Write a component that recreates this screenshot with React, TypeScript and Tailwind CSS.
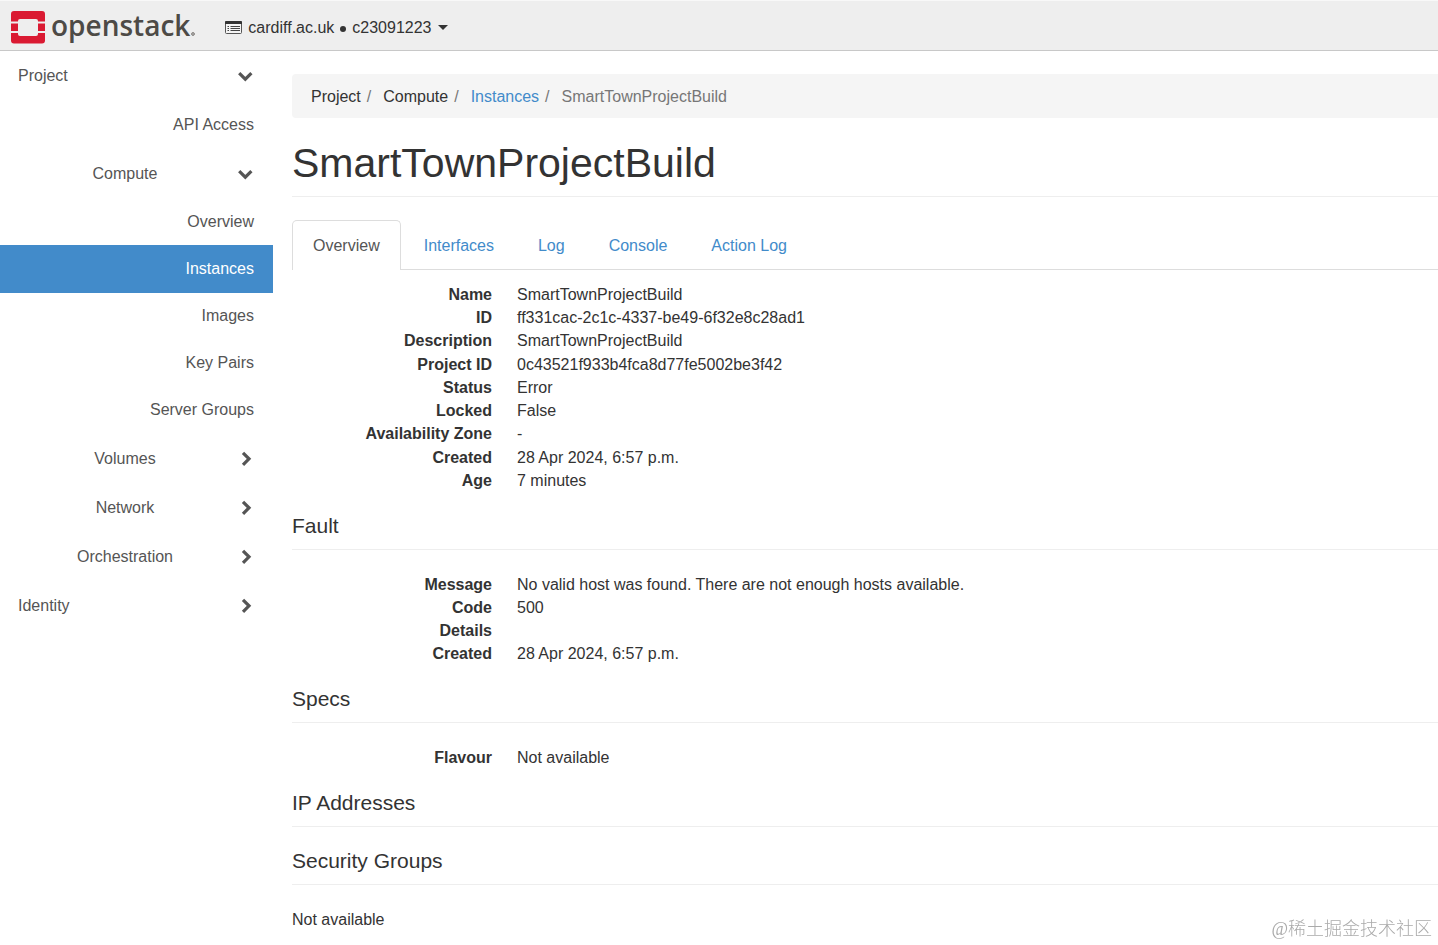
import React from "react";

type Pair = [string, string];

const overview: Pair[] = [
  ["Name", "SmartTownProjectBuild"],
  ["ID", "ff331cac-2c1c-4337-be49-6f32e8c28ad1"],
  ["Description", "SmartTownProjectBuild"],
  ["Project ID", "0c43521f933b4fca8d77fe5002be3f42"],
  ["Status", "Error"],
  ["Locked", "False"],
  ["Availability Zone", "-"],
  ["Created", "28 Apr 2024, 6:57 p.m."],
  ["Age", "7 minutes"],
];

const fault: Pair[] = [
  ["Message", "No valid host was found. There are not enough hosts available."],
  ["Code", "500"],
  ["Details", ""],
  ["Created", "28 Apr 2024, 6:57 p.m."],
];

function Chevron({ open }: { open?: boolean }) {
  return (
    <svg
      viewBox="0 0 16 16"
      className="h-4 w-4 shrink-0"
      fill="none"
      stroke="currentColor"
      strokeWidth="3.2"
      aria-hidden="true"
    >
      <path d={open ? "M2.2 5.2 8.300 11.200l6.100-6" : "M6 1.800 12 7.800l-6 6"} />
    </svg>
  );
}

function TopPanel({ label, open }: { label: string; open?: boolean }) {
  return (
    <button
      type="button"
      aria-expanded={!!open}
      className="flex h-[49px] w-full items-center justify-between pl-[18px] pr-5"
    >
      {label}
      <Chevron open={open} />
    </button>
  );
}

function SubPanel({ label, open }: { label: string; open?: boolean }) {
  return (
    <button
      type="button"
      aria-expanded={!!open}
      className="flex h-[49px] w-full items-center pl-[13px] pr-5"
    >
      <span className="flex-1 text-center">{label}</span>
      <Chevron open={open} />
    </button>
  );
}

function NavItem({ label, active }: { label: string; active?: boolean }) {
  return (
    <a
      href="#"
      aria-current={active ? "page" : undefined}
      className={
        active
          ? "-mb-px flex h-12 items-center justify-end bg-[#428bca] pr-[19px] text-white"
          : "flex h-[47px] items-center justify-end pr-[19px]"
      }
    >
      {label}
    </a>
  );
}

function DetailList({ rows }: { rows: Pair[] }) {
  return (
    <dl className={rows.length > 4 ? "grid min-h-[209px] auto-rows-fr" : "grid"}>
      {rows.map(([term, value]) => (
        <div key={term} className="flex gap-[25px] leading-[23px]">
          <dt className="w-[200px] shrink-0 text-right font-bold">{term}</dt>
          <dd>{value}</dd>
        </div>
      ))}
    </dl>
  );
}

function SectionHeading({ children }: { children: React.ReactNode }) {
  return (
    <h4 className="border-b border-[#eeeeee] pb-[11px] text-[21px] leading-6">
      {children}
    </h4>
  );
}

function Logo() {
  return (
    <a href="#" className="flex items-center gap-[6px] text-[#4d4a46]">
      <svg viewBox="0 0 34 33" className="h-[33px] w-[34px]" aria-hidden="true">
        <g fill="#da1a32">
          <path d="M3 0h28a3 3 0 0 1 3 3v7.500h-7V10a2 2 0 0 0-2-2H9a2 2 0 0 0-2 2v.5H0V3a3 3 0 0 1 3-3Z" />
          <path d="M0 12.500h7v7.500H0zM27 12.500h7v7.500h-7z" />
          <path d="M0 22h7v1a2 2 0 0 0 2 2h16a2 2 0 0 0 2-2v-1h7v7.500a3 3 0 0 1-3 3H3a3 3 0 0 1-3-3Z" />
        </g>
      </svg>
      <span className="flex items-baseline gap-px pb-[5px] font-['Open_Sans',sans-serif] text-[28px] font-semibold leading-8">
        openstack
        <svg viewBox="0 0 4 4" className="h-1 w-1" aria-hidden="true">
          <circle cx="2" cy="2" r="1.400" fill="#bbb" stroke="#77736f" strokeWidth=".9" />
        </svg>
      </span>
    </a>
  );
}

const tabs = ["Overview", "Interfaces", "Log", "Console", "Action Log"];

export default function App() {
  return (
    <div className="min-h-screen overflow-x-hidden bg-white font-['Liberation_Sans',Arial,sans-serif] text-base text-[#333333]">
      <header className="flex h-[51px] items-center gap-[30px] border-b border-t border-b-[#c8c8c8] border-t-[#f8f8f8] bg-[#eeeeee] pl-[11px] pt-[3px]">
        <Logo />
        <button type="button" className="flex items-center gap-[6px] pt-px">
          <svg viewBox="0 0 17 13" className="mb-px h-[13px] w-[17px]" aria-hidden="true">
            <rect x=".5" y=".5" width="16" height="12" rx="1" fill="#f4f4f4" stroke="#555" />
            <path fill="#333" d="M1 0h15a1 1 0 0 1 1 1v2H0V1a1 1 0 0 1 1-1Z" />
            <path
              stroke="#444"
              d="M2.500 5.500H4M2.500 7.500H4M2.500 9.500H4M5.500 5.500H15M5.500 7.500H15M5.500 9.500H15"
            />
          </svg>
          <span>cardiff.ac.uk</span>
          <span className="mt-[3px] h-[6px] w-[6px] rounded-full bg-[#333333]" />
          <span>c23091223</span>
          <svg viewBox="0 0 10 5" className="h-[5px] w-[10px]" aria-hidden="true">
            <path fill="#333" d="M0 0h10L5 5Z" />
          </svg>
        </button>
      </header>

      <div className="flex">
        <nav className="w-[273px] shrink-0 text-[#555555]">
          <TopPanel label="Project" open />
          <a href="#" className="flex h-[49px] items-center justify-end pr-[19px]">
            API Access
          </a>
          <SubPanel label="Compute" open />
          <div className="pb-px">
            <NavItem label="Overview" />
            <NavItem label="Instances" active />
            <NavItem label="Images" />
            <NavItem label="Key Pairs" />
            <NavItem label="Server Groups" />
          </div>
          <SubPanel label="Volumes" />
          <SubPanel label="Network" />
          <SubPanel label="Orchestration" />
          <TopPanel label="Identity" />
        </nav>

        <main className="min-w-0 flex-1 pl-[19px] pt-[23px]">
          <ol className="flex h-11 items-center rounded-l bg-[#f5f5f5] pl-[19px] pt-px">
            <li>Project</li>
            <li className="flex before:px-[6px] before:pr-3 before:text-[#777777] before:content-['/']">
              Compute
            </li>
            <li className="flex before:px-[6px] before:pr-3 before:text-[#777777] before:content-['/']">
              <a href="#" className="text-[#428bca]">
                Instances
              </a>
            </li>
            <li className="flex text-[#777777] before:px-[6px] before:pr-3 before:content-['/']">
              SmartTownProjectBuild
            </li>
          </ol>

          <h1 className="mt-[21px] border-b border-[#eeeeee] pb-[9px] text-[41px] leading-[48px]">
            SmartTownProjectBuild
          </h1>

          <div role="tablist" className="mt-[23px] flex gap-[2px] border-b border-[#dddddd]">
            {tabs.map((tab, i) => (
              <button
                key={tab}
                type="button"
                role="tab"
                aria-selected={i === 0}
                className={
                  i === 0
                    ? "-mb-px h-[50px] rounded-t-[5px] border border-b-0 border-[#dddddd] bg-white px-5 text-[#555555]"
                    : "h-[49px] px-[21px] pt-[2px] text-[#428bca]"
                }
              >
                {tab}
              </button>
            ))}
          </div>

          <div className="pt-[13px]">
            <DetailList rows={overview} />
          </div>

          <div className="mt-[22px]">
            <SectionHeading>Fault</SectionHeading>
            <div className="pt-[23px]">
              <DetailList rows={fault} />
            </div>
          </div>

          <div className="mt-[22px]">
            <SectionHeading>Specs</SectionHeading>
            <div className="pt-[23px]">
              <DetailList rows={[["Flavour", "Not available"]]} />
            </div>
          </div>

          <div className="mt-[22px]">
            <SectionHeading>IP Addresses</SectionHeading>
          </div>

          <div className="mt-[22px]">
            <SectionHeading>Security Groups</SectionHeading>
            <p className="pt-[23px] leading-[23px]">Not available</p>
          </div>
        </main>
      </div>

      <div className="fixed bottom-1 right-[6px] font-['Liberation_Serif','Noto_Sans_CJK_SC',serif] text-lg font-light leading-6 text-[#aaaaaa]">
        @稀土掘金技术社区
      </div>
    </div>
  );
}
